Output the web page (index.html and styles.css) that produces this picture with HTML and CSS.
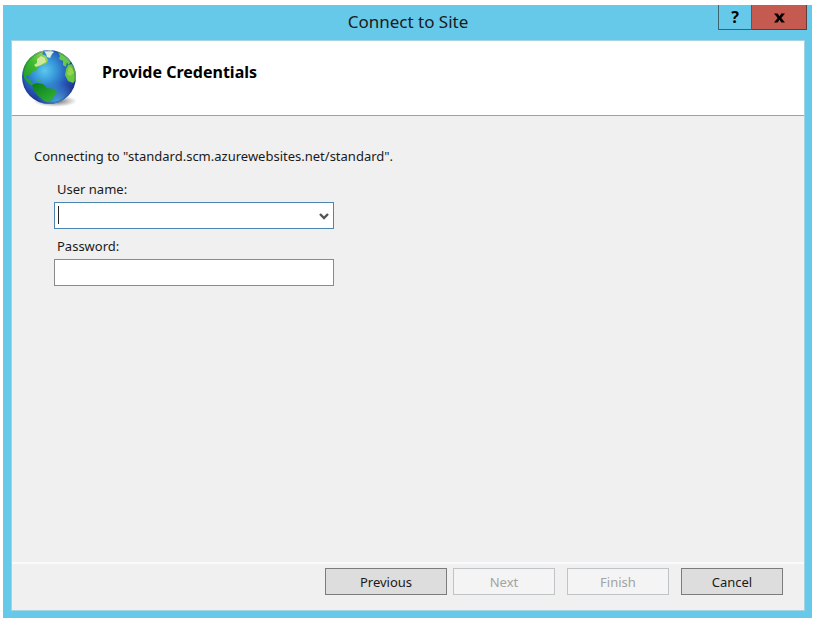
FILE: index.html
```html
<!DOCTYPE html>
<html lang="en">
<head>
<meta charset="utf-8">
<title>Connect to Site</title>
<link rel="stylesheet" href="styles.css">
</head>
<body>
<main class="window">
  <header class="titlebar">
    <h1 class="title">Connect to Site</h1>
    <div class="window-controls">
      <button type="button" class="control help" aria-label="Help">?</button>
      <button type="button" class="control close" aria-label="Close">
        <svg width="11" height="10" viewBox="0 0 12 10"><path d="M0 0h4l2 3 2-3h4L8 5l4 5H8L6 7l-2 3H0l4-5z"/></svg>
      </button>
    </div>
  </header>
  <form class="dialog">
    <div class="banner">
      <svg class="globe" width="60" height="60" viewBox="0 0 60 60" aria-hidden="true">
        <defs>
          <radialGradient id="sea" cx=".42" cy=".38" r=".64">
            <stop offset="0" stop-color="#5cc8ee"/>
            <stop offset=".35" stop-color="#3595d8"/>
            <stop offset=".7" stop-color="#2450b2"/>
            <stop offset="1" stop-color="#20308c"/>
          </radialGradient>
          <radialGradient id="glow" cx=".66" cy="1" r=".4">
            <stop offset="0" stop-color="#58c8f4" stop-opacity=".8"/>
            <stop offset="1" stop-color="#58c8f4" stop-opacity="0"/>
          </radialGradient>
          <radialGradient id="shade">
            <stop offset="0" stop-color="#333" stop-opacity=".8"/>
            <stop offset="1" stop-color="#555" stop-opacity="0"/>
          </radialGradient>
          <linearGradient id="north" x1="0" y1="1" x2="1" y2="0">
            <stop offset="0" stop-color="#15962a"/>
            <stop offset=".5" stop-color="#3db82f"/>
            <stop offset="1" stop-color="#b4dc74"/>
          </linearGradient>
          <linearGradient id="south" x1="0" y1="0" x2="1" y2="1">
            <stop offset="0" stop-color="#087a18"/>
            <stop offset="1" stop-color="#35b83b"/>
          </linearGradient>
          <clipPath id="disc"><circle cx="29" cy="29" r="27"/></clipPath>
        </defs>
        <ellipse cx="35" cy="53" rx="22" ry="6" fill="url(#shade)"/>
        <circle cx="29" cy="29" r="27" fill="url(#sea)"/>
        <g clip-path="url(#disc)">
          <circle cx="29" cy="29" r="27" fill="url(#glow)"/>
          <path fill="url(#north)" d="M3 24 4 15l6-8 9-5 5 1-2 3 4 2 2 4-1 3-4 2-4 1-2 4-5 2-2 3-4 1 1 3 3 0 1 3 4 4-2 0-5-3-4-5z"/>
          <path fill="#e0edaa" d="m17 11 4-3 4 2 1 4-5 3-5 2-2-2 3-2z" opacity=".85"/>
          <path fill="#dcefdc" d="m24 3 7-1 3 2-2 2-2 4-3-1-1-3z"/>
          <path fill="#67c94b" d="m38 4 7 2 6 8-3 3-1-3-1 5-3-2 0-4-4-2 1-3z"/>
          <path fill="#66c83f" d="m48 17 4-1 4 7v9l-3 3-5-2-3-6 1-6z"/>
          <path fill="#a4d655" d="m49 19 3 1 2 5-4 3-3-2z" opacity=".8"/>
          <path fill="#3fb649" d="m17 31 4 2-1 1-4-2z"/>
          <path fill="url(#south)" d="m12 37 5-2 6 1 4 4 8 1 2 3-3 4-2 4-5 2-4-2-5-4-4-5z"/>
        </g>
        <circle cx="29" cy="29" r="26" fill="none" stroke="#17336f" stroke-opacity=".3"/>
      </svg>
      <h2 class="heading">Provide Credentials</h2>
    </div>
    <section class="content">
      <p class="message">Connecting to "standard.scm.azurewebsites.net/standard".</p>
      <div class="fields">
        <label for="user">User name:</label>
        <div class="combo">
          <input id="user" class="field active" type="text" autocomplete="off">
          <button type="button" class="arrow" aria-label="Show user names">
            <svg width="10" height="8" viewBox="0 0 10 8"><path d="m1 1 4 4 4-4" fill="none" stroke="#555" stroke-width="2.4"/></svg>
          </button>
        </div>
        <label for="password">Password:</label>
        <input id="password" class="field" type="password">
      </div>
    </section>
    <footer class="actions">
      <button type="button" class="action previous">Previous</button>
      <button type="button" class="action next" disabled>Next</button>
      <button type="submit" class="action" disabled>Finish</button>
      <button type="button" class="action">Cancel</button>
    </footer>
  </form>
</main>
</body>
</html>
```
FILE: styles.css
```css
* { box-sizing: border-box; }
body {
  margin: 0;
  padding: 5px 1px 4px 3px;
  min-height: 100vh;
  display: flex;
  background: #fff;
  color: #1a1a1a;
  font: 13px/18px "Noto Sans", "Open Sans", sans-serif;
}
h1, h2, p { margin: 0; }
button, input { font: inherit; color: inherit; border-radius: 0; }
.window {
  flex: 1;
  display: flex;
  flex-direction: column;
  padding: 0 7px 7px 8px;
  background: #66c9e9;
}
.titlebar {
  position: relative;
  height: 35px;
  display: flex;
  justify-content: center;
  align-items: center;
}
.title {
  padding-bottom: 2px;
  font-size: 17px;
  line-height: 24px;
  font-weight: 400;
}
.window-controls {
  position: absolute;
  top: 0;
  right: -2px;
  display: flex;
}
.control {
  width: 34px;
  height: 25px;
  padding: 0;
  border: 1px solid #3c6470;
  border-top: 0;
  background: #66c9e9;
  color: #000;
  font-size: 16px;
  line-height: 22px;
  font-weight: 700;
}
.close {
  width: 55px;
  border-color: #633b3a;
  border-left: 0;
  background: #c45a50;
}
.dialog {
  flex: 1;
  display: flex;
  flex-direction: column;
  border: 1px solid #a5d3e2;
  background: #f0f0f0;
}
.banner {
  height: 75px;
  display: flex;
  align-items: center;
  gap: 22px;
  padding-left: 8px;
  border-bottom: 1px solid #a0a0a0;
  background: #fff;
}
.heading {
  padding-bottom: 12px;
  color: #000;
  font-size: 16px;
  line-height: 20px;
}
.content { flex: 1; padding: 31px 22px; }
.fields {
  width: 280px;
  margin: 15px 0 0 20px;
  display: flex;
  flex-direction: column;
}
.fields label { padding-left: 3px; margin-bottom: 4px; }
.combo { position: relative; display: flex; margin-bottom: 8px; }
.combo::before {
  content: "";
  position: absolute;
  left: 4px;
  top: 4px;
  width: 1px;
  height: 18px;
  background: #222;
}
.field {
  width: 100%;
  height: 27px;
  padding: 0 6px;
  border: 1px solid #8a8a8a;
  background: #fff;
  outline: 0;
}
.active { border-color: #4b86b0; }
.arrow {
  position: absolute;
  right: 1px;
  top: 1px;
  width: 18px;
  height: 25px;
  padding: 0;
  border: 0;
  background: transparent;
}
.actions {
  display: flex;
  justify-content: flex-end;
  gap: 12px;
  padding: 4px 21px 15px;
  border-top: 2px solid #fafafa;
}
.action {
  width: 102px;
  height: 27px;
  padding: 0;
  border: 1px solid #7c7c7c;
  background: #ddd;
}
.action:disabled { border-color: #bfc4c6; background: #f4f4f4; color: #a3a3a3; }
.previous { width: 122px; margin-right: -6px; }
```
